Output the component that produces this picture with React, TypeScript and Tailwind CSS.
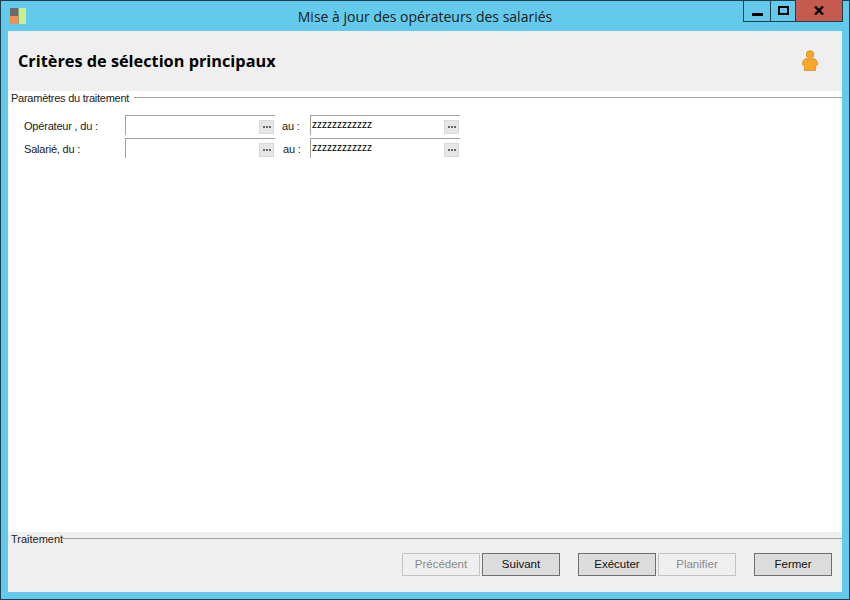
const uiFont = "font-['Liberation_Sans',sans-serif]";

function AppIcon() {
  return (
    <svg width="17" height="17" viewBox="0 0 17 17" className="block">
      <rect x="0" y="0" width="8" height="8" fill="#6b6b6b" />
      <rect x="0" y="8" width="8" height="8" fill="#f3905a" />
      <rect x="8" y="0" width="8" height="16" fill="#c6f08c" />
      <rect x="8" y="0" width="1" height="16" fill="#8fa37a" />
    </svg>
  );
}

function PersonIcon() {
  return (
    <svg width="18" height="22" viewBox="0 0 18 22" className="block">
      <circle cx="9" cy="4.5" r="3.8" fill="#fba826" stroke="#c9861f" strokeWidth="0.7" />
      <path
        d="M5 8.5 C2.5 9.5 1.5 11.5 1.2 14.5 L3.2 15.5 L3.6 20.5 L14.4 20.5 L14.8 15.5 L16.8 14.5 C16.5 11.5 15.5 9.5 13 8.5 C11 9.5 7 9.5 5 8.5 Z"
        fill="#fba826"
        stroke="#c9861f"
        strokeWidth="0.7"
      />
    </svg>
  );
}

function WindowControls() {
  return (
    <div className="flex h-[22px] border-b border-l border-r border-[#1d3f4f]">
      <div className="w-[27px] flex items-end justify-center pb-[5px] border-r border-[#1d3f4f]">
        <span className="block w-[11px] h-[3px] bg-black" />
      </div>
      <div className="w-[25px] flex items-center justify-center border-r border-[#1d3f4f] pb-[1px]">
        <span className="block w-[11px] h-[9px] border-2 border-black" />
      </div>
      <div className="w-[46px] flex items-center justify-center bg-[#c75a4e]">
        <svg width="10" height="9" viewBox="0 0 10 9">
          <path d="M1 0.5 L9 8.5 M9 0.5 L1 8.5" stroke="#000" strokeWidth="2.4" />
        </svg>
      </div>
    </div>
  );
}

function Field({ value }: { value?: string }) {
  return (
    <div className="w-[150px] h-[20px] border-t border-l border-[#a0a0a0] flex justify-between">
      <span className="pl-[1px] pt-[2px] text-[10px] leading-[14px] text-black font-['Liberation_Sans',sans-serif]">
        {value}
      </span>
      <span className="mt-[4px] mr-[1px] w-[15px] h-[14px] bg-[#e6e6e6] border border-[#d8d8d8] flex items-center justify-center gap-[1px]">
        <i className="block w-[2px] h-[2px] bg-[#666]" />
        <i className="block w-[2px] h-[2px] bg-[#666]" />
        <i className="block w-[2px] h-[2px] bg-[#666]" />
      </span>
    </div>
  );
}

function Row({ label, auShift }: { label: string; auShift?: boolean }) {
  return (
    <div className="flex items-start h-[23px]">
      <span className="w-[101px] pt-[4px] text-[11px] tracking-[-0.2px] leading-[14px] text-[#222]">{label}</span>
      <Field />
      <span
        className={
          auShift
            ? "w-[35px] pl-[8px] pt-[4px] text-[11px] tracking-[-0.2px] leading-[14px] text-[#222]"
            : "w-[35px] pl-[7px] pt-[4px] text-[11px] tracking-[-0.2px] leading-[14px] text-[#222]"
        }
      >
        au :
      </span>
      <Field value="zzzzzzzzzzzz" />
    </div>
  );
}

function FooterButton({ label, disabled }: { label: string; disabled?: boolean }) {
  return (
    <button
      className={
        disabled
          ? "w-[78px] h-[23px] bg-[#efefef] border border-[#c4c4c4] text-[#8a8a8a] text-[11.5px]"
          : "w-[78px] h-[23px] bg-[#dcdcdc] border border-[#6f6f6f] text-[#111] text-[11.5px]"
      }
    >
      {label}
    </button>
  );
}

export default function App() {
  return (
    <div className={`w-[850px] h-[600px] flex flex-col bg-[#63caec] border border-[#1d3f4f] ${uiFont}`}>
      <div className="h-[30px] grid grid-cols-[1fr_auto_1fr] shrink-0">
        <div className="pl-[9px] pt-[7px]">
          <AppIcon />
        </div>
        <div className="pt-[6px] text-[14px] leading-[20px] text-[#1a1a1a] font-['Open_Sans',sans-serif]">
          Mise à jour des opérateurs des salariés
        </div>
        <div className="flex justify-end pr-[6px] -mt-[1px]">
          <WindowControls />
        </div>
      </div>

      <div className="mx-[7px] flex-1 min-h-0 flex flex-col bg-white">
        <div className="h-[60px] bg-[#efefef] flex items-center justify-between pl-[10px] pr-[23px] shrink-0">
          <h1 className="pt-[1px] text-[16.3px] font-bold text-black font-['Open_Sans',sans-serif]">
            Critères de sélection principaux
          </h1>
          <PersonIcon />
        </div>

        <div className="flex items-center h-[13px] pl-[3px] shrink-0">
          <span className="pt-[2px] text-[11px] tracking-[-0.25px] text-[#222] pr-[5px] leading-[13px]">
            Paramètres du traitement
          </span>
          <div className="flex-1 h-px bg-[#a0a0a0]" />
        </div>

        <div className="flex-1 min-h-0 pt-[11px] pl-[16px]">
          <Row label="Opérateur , du :" />
          <Row label="Salarié, du :" auShift />
        </div>

        <div className="h-[60px] bg-[#efefef] shrink-0 flex flex-col">
          <div className="flex items-center h-[13px] pl-[3px]">
            <span className="pt-[2px] text-[11px] text-[#222] leading-[13px]">Traitement</span>
            <div className="flex-1 h-px bg-[#a0a0a0]" />
          </div>
          <div className="flex justify-end pt-[8px] pr-[10px]">
            <FooterButton label="Précédent" disabled />
            <div className="w-[2px]" />
            <FooterButton label="Suivant" />
            <div className="w-[18px]" />
            <FooterButton label="Exécuter" />
            <div className="w-[2px]" />
            <FooterButton label="Planifier" disabled />
            <div className="w-[18px]" />
            <FooterButton label="Fermer" />
          </div>
        </div>
      </div>
      <div className="h-[7px] shrink-0" />
    </div>
  );
}
